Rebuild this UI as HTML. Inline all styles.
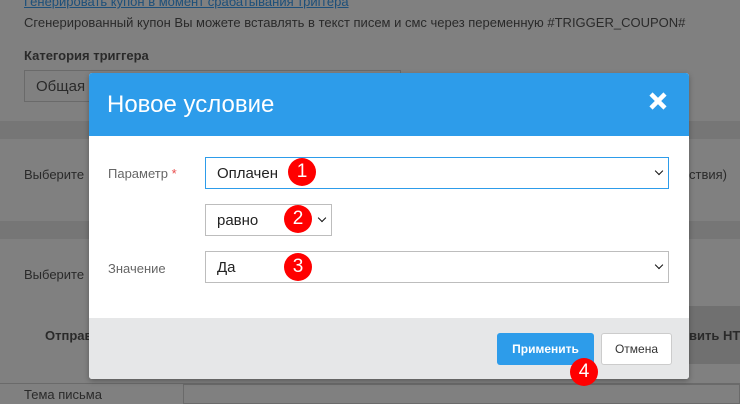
<!DOCTYPE html>
<html><head><meta charset="utf-8"><style>
*{box-sizing:border-box;margin:0;padding:0}
body{width:740px;height:400px;overflow:hidden;background:#808080;font-family:"Liberation Sans","DejaVu Sans",sans-serif;position:relative;color:#222}
.a{position:absolute}
.band{position:absolute;left:0;width:740px;background:#767676}
.t{position:absolute;font-size:13px;color:#2a2a2a;white-space:nowrap}
.modal{position:absolute;left:89px;top:73px;width:600px;height:306px;background:#fff;border-radius:3px;overflow:hidden;box-shadow:0 2px 6px rgba(0,0,0,.3)}
.hdr{height:63px;background:#2d9cea;color:#fff;font-size:24px;padding:18px 0 0 18px}
.x{position:absolute;right:20px;top:17px;width:22px;height:22px}
.lbl{position:absolute;font-size:13px;color:#666}
.sel{position:absolute;height:32px;border:1px solid #bdbdbd;background:#fff;font-size:15px;color:#222;padding:7px 0 0 11px}
.chev{position:absolute;right:6px;top:10px;width:6px;height:6px;border-right:1.6px solid #111;border-bottom:1.6px solid #111;transform:rotate(45deg)}
.foot{position:absolute;left:0;top:245px;width:600px;height:61px;background:#e6e7e8}
.num{position:absolute;width:28px;height:28px;border-radius:50%;background:#f00;color:#fff;font-size:19px;text-align:center;line-height:28px}
.btn{position:absolute;top:260px;height:32px;border-radius:3px;font-size:12px;font-weight:bold;text-align:center;line-height:32px}
</style></head><body>
<div class="band" style="top:121px;height:18px"></div>
<div class="band" style="top:221px;height:18px"></div>
<div class="band" style="top:306px;height:58px;left:600px;width:140px;background:#707070"></div>
<div class="a" style="top:383px;left:0;width:740px;height:1px;background:#6a6a6a"></div>
<div class="a" style="top:384px;left:183px;width:557px;height:20px;border:1px solid #6a6a6a;background:#808080"></div>
<div class="t" style="left:24px;top:-6px;color:#1c4f7a;text-decoration:underline">Генерировать купон в момент срабатывания триггера</div>
<div class="t" style="left:24px;top:15px">Сгенерированный купон Вы можете вставлять в текст писем и смс через переменную #TRIGGER_COUPON#</div>
<div class="t" style="left:24px;top:48px;font-weight:bold">Категория триггера</div>
<div class="a" style="left:24px;top:70px;width:377px;height:32px;border:1px solid #6a6a6a"></div>
<div class="t" style="left:36px;top:78px;font-size:15px">Общая</div>
<div class="t" style="left:24px;top:167px">Выберите</div>
<div class="t" style="left:689px;top:167px">ствия)</div>
<div class="t" style="left:24px;top:267px">Выберите</div>
<div class="t" style="left:45px;top:328px;font-weight:bold">Отправ</div>
<div class="t" style="left:689px;top:328px;font-weight:bold">вить НТ</div>
<div class="t" style="left:24px;top:387px">Тема письма</div>
<div class="modal">
 <div class="hdr">Новое условие</div>
 <svg class="x" viewBox="0 0 22 22"><path d="M4 4L18 18M18 4L4 18" stroke="#fff" stroke-width="4.5"/></svg>
 <div class="lbl" style="left:19px;top:93px">Параметр <span style="color:#e84c4c">*</span></div>
 <div class="sel" style="left:116px;top:84px;width:464px;border-color:#2d9cea">Оплачен<div class="chev"></div></div>
 <div class="sel" style="left:116px;top:131px;width:127px">равно<div class="chev"></div></div>
 <div class="lbl" style="left:19px;top:188px">Значение</div>
 <div class="sel" style="left:116px;top:178px;width:464px">Да<div class="chev"></div></div>
 <div class="foot"></div>
 <div class="btn" style="left:408px;width:97px;background:#2d9cea;color:#fff">Применить</div>
 <div class="btn" style="left:512px;width:71px;background:#fff;border:1px solid #ccc;color:#333;font-weight:normal;line-height:30px">Отмена</div>
</div>
<div class="num" style="left:288px;top:158px">1</div>
<div class="num" style="left:284px;top:205px">2</div>
<div class="num" style="left:284px;top:253px">3</div>
<div class="num" style="left:570px;top:358px">4</div>
</body></html>
